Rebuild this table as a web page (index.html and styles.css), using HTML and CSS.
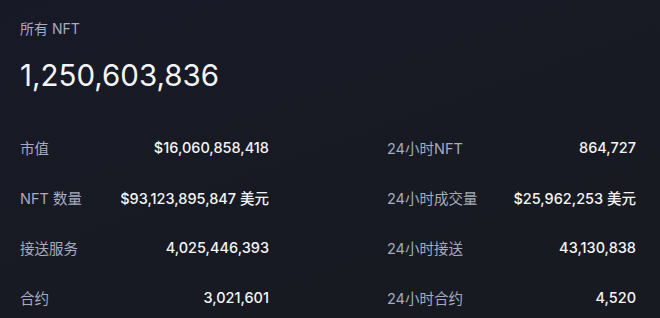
FILE: index.html
```html
<!DOCTYPE html>
<html lang="zh">
<head>
<meta charset="utf-8">
<link rel="stylesheet" href="styles.css">
</head>
<body>
<main class="panel">
  <div class="title">所有 NFT</div>
  <div class="total">1,250,603,836</div>
  <div class="grid">
    <div class="row"><span class="label">市值</span><span class="value">$16,060,858,418</span></div>
    <div class="row"><span class="label">24小时NFT</span><span class="value">864,727</span></div>
    <div class="row"><span class="label">NFT 数量</span><span class="value">$93,123,895,847 美元</span></div>
    <div class="row"><span class="label">24小时成交量</span><span class="value">$25,962,253 美元</span></div>
    <div class="row"><span class="label">接送服务</span><span class="value">4,025,446,393</span></div>
    <div class="row"><span class="label">24小时接送</span><span class="value">43,130,838</span></div>
    <div class="row"><span class="label">合约</span><span class="value">3,021,601</span></div>
    <div class="row"><span class="label">24小时合约</span><span class="value">4,520</span></div>
  </div>
</main>
</body>
</html>
```

FILE: styles.css
```css
html, body {
  margin: 0;
  padding: 0;
}
body {
  width: 660px;
  height: 318px;
  overflow: hidden;
  background: linear-gradient(160deg, #181927 0%, #171a22 60%, #171a20 100%);
  font-family: "Inter", "Noto Sans CJK SC", sans-serif;
}
.panel {
  padding: 19px 24px 0 20px;
}
.title {
  font-size: 14px;
  line-height: 20px;
  color: #a6abc0;
}
.total {
  margin-top: 18px;
  font-size: 29.5px;
  line-height: 36px;
  color: #f4f5f8;
  font-weight: 400;
}
.grid {
  margin-top: 43px;
  display: grid;
  grid-template-columns: 249px 249px;
  column-gap: 118px;
  row-gap: 28px;
}
.row {
  display: flex;
  justify-content: space-between;
  align-items: center;
  height: 22px;
}
.label {
  font-size: 14.5px;
  color: #a6abc0;
}
.value {
  font-size: 14.5px;
  font-weight: 500;
  color: #f4f5f8;
}
```
